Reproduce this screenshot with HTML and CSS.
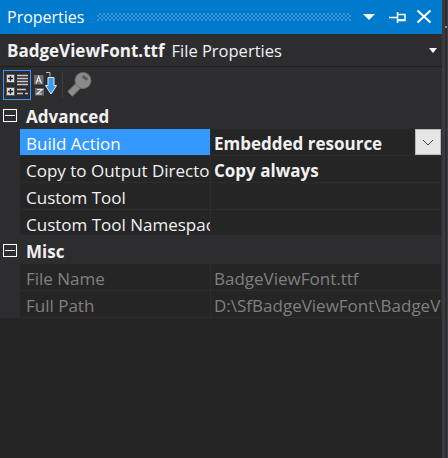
FILE: index.html
```html
<!DOCTYPE html>
<html lang="en">
<head>
<meta charset="utf-8">
<title>Properties</title>
<link rel="stylesheet" href="styles.css">
</head>
<body>
<div class="panel">
  <header class="titlebar">
    <span class="title">Properties</span>
    <span class="grip"></span>
    <svg class="tb-icons" width="74" height="34" viewBox="0 0 74 34">
      <path d="M3 14h12l-6 6z" fill="#fff"/>
      <path d="M29 17.500h8M37.500 12v11M37.500 14.500h7.500v6h-7.500" fill="none" stroke="#fff" stroke-width="1.500"/>
      <path d="M38 19h7v2h-7z" fill="#fff"/>
      <path d="M57.500 10.500l13 12M70.500 10.500l-13 12" stroke="#fff" stroke-width="2" fill="none"/>
    </svg>
  </header>
  <div class="objectbar">
    <span class="objname">BadgeViewFont.ttf</span>
    <span class="objtype">File Properties</span>
    <svg class="objarrow" width="8" height="5" viewBox="0 0 8 5"><path d="M0 0h8l-4 5z" fill="#fff"/></svg>
  </div>
  <div class="toolbar">
    <span class="toolbtn">
      <svg width="26" height="28" viewBox="0 0 26 28">
        <rect x="2.500" y="3.500" width="8" height="8" fill="#ddd" stroke="#555"/>
        <path d="M4 7.500h5M6.500 5v5" stroke="#222" stroke-width="1.300"/>
        <rect x="2.500" y="16.500" width="8" height="8" fill="#ddd" stroke="#555"/>
        <path d="M4 20.500h5M6.500 18v5" stroke="#222" stroke-width="1.300"/>
        <path d="M13 4.500h11M13 7.500h11M13 10.500h11M13 13.500h11M13 18.500h9M13 22.500h6M21 22.500h3" stroke="#c8c8c8" stroke-width="1.500"/>
      </svg>
    </span>
    <svg class="sorticon" width="24" height="25" viewBox="0 0 24 25">
      <rect x="1" y="3" width="9.500" height="9.500" fill="#6e6e6e"/>
      <path d="M3 11.500l2.700-7 2.700 7M4 9h3.500" fill="none" stroke="#e4e4e4" stroke-width="1.200"/>
      <rect x="2" y="16" width="9" height="7.500" fill="#6e6e6e"/>
      <path d="M4 17.500h5l-5 4.500h5" fill="none" stroke="#e4e4e4" stroke-width="1.200"/>
      <path d="M13 .500h4v4" fill="none" stroke="#bbb"/>
      <path d="M15 5.500h6v8h2.500l-5.500 8.500-5.500-8.500h2.500z" fill="#3a9be8" stroke="#d8ecfb"/>
    </svg>
    <span class="sep"></span>
    <svg class="keyicon" width="25" height="25" viewBox="0 0 25 25">
      <path d="M13 12L3 22" stroke="#6a6a6a" stroke-width="7.500"/>
      <path d="M13 12L3 22" stroke="#8a8a8a" stroke-width="5.500"/>
      <circle cx="16" cy="8.500" r="8" fill="#8a8a8a" stroke="#6a6a6a"/>
      <rect x="15" y="4.500" width="6" height="3" transform="rotate(35 18 6)" fill="#5c5c5c"/>
    </svg>
  </div>
  <div class="grid">
    <div class="cat cat-first">
      <svg class="minus" width="14" height="13" viewBox="0 0 14 13"><rect x=".5" y=".5" width="13" height="12" fill="none" stroke="#fff"/><path d="M2 6.500h10" stroke="#fff"/></svg>
      <span class="catname">Advanced</span>
    </div>
    <div class="row selected">
      <span class="key">Build Action</span>
      <span class="val bold">Embedded resource</span>
      <span class="dropbtn"><svg width="12" height="7" viewBox="0 0 12 7"><path d="M1 1l5 5 5-5" fill="none" stroke="#444"/></svg></span>
    </div>
    <div class="row">
      <span class="key">Copy to Output Directory</span>
      <span class="val bold">Copy always</span>
    </div>
    <div class="row">
      <span class="key">Custom Tool</span>
      <span class="val"></span>
    </div>
    <div class="row row-short">
      <span class="key">Custom Tool Namespace</span>
      <span class="val"></span>
    </div>
    <div class="cat">
      <svg class="minus" width="14" height="13" viewBox="0 0 14 13"><rect x=".5" y=".5" width="13" height="12" fill="none" stroke="#fff"/><path d="M2 6.500h10" stroke="#fff"/></svg>
      <span class="catname">Misc</span>
    </div>
    <div class="row dim">
      <span class="key">File Name</span>
      <span class="val">BadgeViewFont.ttf</span>
    </div>
    <div class="row dim">
      <span class="key">Full Path</span>
      <span class="val">D:\SfBadgeViewFont\BadgeViewFont\BadgeViewFont.ttf</span>
    </div>
  </div>
</div>
<div class="edge"><span class="edge-tick"></span></div>
</body>
</html>
```
FILE: styles.css
```css
* { box-sizing: border-box; }
html, body { margin: 0; height: 100%; background: #2d2d30; }
body { overflow: hidden; display: flex; font-family: "Open Sans", "Noto Sans", sans-serif; color: #f1f1f1; }
.panel { width: 442px; height: 458px; flex: none; display: flex; flex-direction: column; background: #252526; }
.edge { flex: 1; border-left: 3px solid #3a3a3f; border-right: 1px solid #3f3f46; padding-top: 26px; }
.edge-tick { display: block; height: 2px; background: #8a8a8a; }
.titlebar { height: 34px; flex: none; background: #007acc; display: flex; align-items: center; padding-left: 7px; color: #fff; }
.title { font-size: 16px; width: 78px; }
.grip { flex: 1; height: 8px; margin: 0 9px 0 12px; background-image: conic-gradient(#3493d6 25%, transparent 0 50%, #3493d6 0 75%, transparent 0); background-size: 4px 4px; }
.tb-icons { flex: none; margin-right: 8px; }
.objectbar { height: 33px; flex: none; background: #2d2d30; display: flex; align-items: center; padding-left: 7px; border-bottom: 1px solid #1e1e1e; position: relative; }
.objname { font-weight: 700; font-size: 17px; }
.objtype { margin-left: 7px; font-size: 16.500px; }
.objarrow { position: absolute; right: 5px; top: 14px; }
.toolbar { height: 35px; flex: none; background: #2d2d30; display: flex; align-items: center; padding-left: 3px; }
.toolbtn { width: 28px; height: 30px; border: 1px solid #3399ff; display: flex; align-items: center; justify-content: center; }
.sorticon { margin-left: 2px; }
.sep { width: 1px; height: 26px; background: #3f3f41; margin: 0 4px 0 5px; }
.grid { flex: 1; background: #252526; font-size: 17px; }
.cat { height: 28px; background: #2d2d30; display: flex; align-items: center; padding-left: 3px; }
.cat-first { height: 27px; }
.catname { font-weight: 700; margin-left: 9px; padding-top: 2px; }
.row { height: 27px; padding: 0 1px 0 20px; display: grid; grid-template-columns: 191px 1fr; background: #2d2d30; border-bottom: 1px solid #2d2d30; position: relative; }
.row-short { height: 26px; }
.key { padding-left: 6px; white-space: nowrap; overflow: hidden; line-height: 30px; background: #252526; border-right: 1px solid #2d2d30; }
.val { padding-left: 3px; white-space: nowrap; overflow: hidden; line-height: 30px; background: #252526; }
.bold { font-weight: 700; }
.selected .key { background: #3399ff; color: #fff; }
.dim { color: #808080; }
.dropbtn { position: absolute; right: 1px; top: 0; width: 26px; height: 26px; background: #e6e6e6; border: 1px solid #b8b8b8; display: flex; align-items: center; justify-content: center; }
```
